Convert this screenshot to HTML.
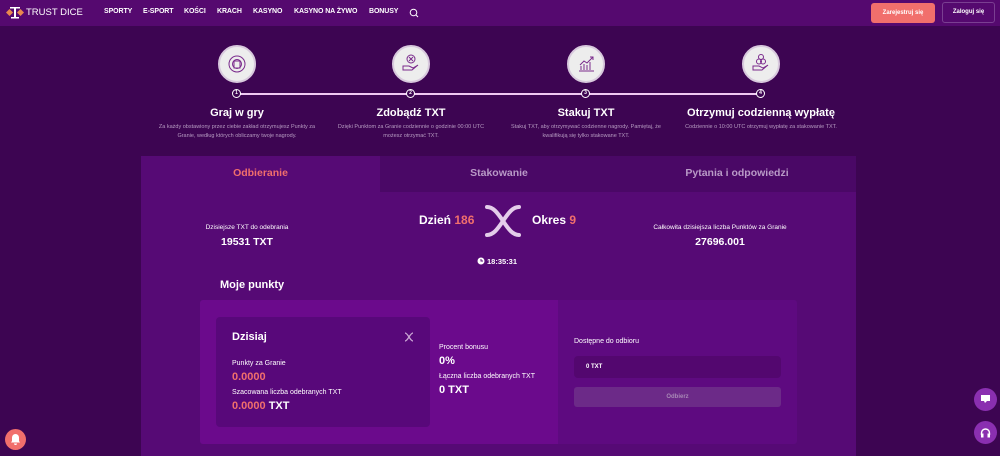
<!DOCTYPE html><html><head><meta charset="utf-8"><style>
*{margin:0;padding:0;box-sizing:border-box}
body{width:1000px;height:456px;overflow:hidden;background:#3d0552;font-family:"Liberation Sans",sans-serif;color:#fff;position:relative}
.a{position:absolute}
.hdr{left:0;top:0;width:1000px;height:26px;background:#55096f}
.nav{top:8px;font-size:7px;font-weight:bold;color:#fff;letter-spacing:-0.1px}
.c{text-align:center}
.circ{width:38px;height:38px;border-radius:50%;background:#ededed;border:2px solid #d8c9dd;top:45px}
.num{width:9px;height:9px;border-radius:50%;border:1px solid #fff;background:#3d0552;font-size:5px;line-height:7px;text-align:center;top:89px;font-weight:bold}
.t{font-size:11px;font-weight:bold;top:107px;width:220px}
.d{font-size:5.5px;color:#b79cc2;top:123px;width:160px;line-height:9px}
</style></head><body>
<div class="a hdr"></div>
<div class="a" style="left:6px;top:6px;width:18px;height:13px"><svg width="18" height="13"><rect x="1" y="4" width="5" height="5" fill="#e9884e" transform="rotate(45 3.5 6.5)"/><rect x="12" y="4" width="5" height="5" fill="#e9884e" transform="rotate(45 14.5 6.5)"/><rect x="8" y="1" width="2" height="11" fill="#fff"/><rect x="4" y="1" width="10" height="1.5" fill="#fff"/><rect x="5" y="11" width="8" height="1.5" fill="#fff"/></svg></div>
<div class="a" style="left:26px;top:7px;font-size:9.5px;color:#fff">TRUST DICE</div>
<div class="a nav" style="left:104px">SPORTY</div>
<div class="a nav" style="left:143px">E-SPORT</div>
<div class="a nav" style="left:184px">KOŚCI</div>
<div class="a nav" style="left:217px">KRACH</div>
<div class="a nav" style="left:253px">KASYNO</div>
<div class="a nav" style="left:294px">KASYNO NA ŻYWO</div>
<div class="a nav" style="left:369px">BONUSY</div>
<svg class="a" style="left:409px;top:8px" width="10" height="10"><circle cx="4.5" cy="4.5" r="3.3" stroke="#fff" fill="none" stroke-width="1"/><line x1="7" y1="7" x2="9" y2="9" stroke="#fff"/></svg>
<div class="a c" style="left:871px;top:3px;width:64px;height:20px;background:#f16f6c;border-radius:3px;font-size:6px;font-weight:bold;line-height:20px">Zarejestruj się</div>
<div class="a c" style="left:942px;top:2px;width:53px;height:21px;border:1px solid #7a3f91;border-radius:3px;font-size:6px;font-weight:bold;line-height:19px">Zaloguj się</div>

<div class="a" style="left:237px;top:93px;width:524px;height:2px;background:#f0c8f3"></div>
<div class="a circ" style="left:218px"></div><div class="a circ" style="left:392px"></div><div class="a circ" style="left:567px"></div><div class="a circ" style="left:742px"></div>
<svg class="a" style="left:227px;top:54px" width="20" height="20" fill="none" stroke="#7a2a8c" stroke-width="1"><circle cx="10" cy="10" r="8"/><rect x="7" y="7" width="6" height="7"/><circle cx="10" cy="10" r="4.5"/></svg>
<svg class="a" style="left:401px;top:53px" width="20" height="20" fill="none" stroke="#7a2a8c" stroke-width="1"><circle cx="10" cy="6" r="4"/><path d="M8 4l4 4M12 4l-4 4M2 13h6l4 2 5-3-6 5H2z"/></svg>
<svg class="a" style="left:576px;top:54px" width="20" height="20" fill="none" stroke="#7a2a8c" stroke-width="1"><path d="M3 17h15M5 16v-4M8 16v-6M11 16v-5M14 16v-8M4 11l4-4 3 2 6-6M14 3h3v3"/></svg>
<svg class="a" style="left:751px;top:53px" width="20" height="20" fill="none" stroke="#7a2a8c" stroke-width="1"><circle cx="10" cy="4" r="2.5"/><circle cx="8" cy="8.5" r="2.5"/><circle cx="12" cy="8.5" r="2.5"/><path d="M2 13h6l4 2 5-3-6 5H2z"/></svg>
<div class="a num" style="left:232px">1</div><div class="a num" style="left:406px">2</div><div class="a num" style="left:581px">3</div><div class="a num" style="left:756px">4</div>
<div class="a c t" style="left:127px">Graj w gry</div>
<div class="a c t" style="left:301px">Zdobądź TXT</div>
<div class="a c t" style="left:476px">Stakuj TXT</div>
<div class="a c t" style="left:651px">Otrzymuj codzienną wypłatę</div>
<div class="a c d" style="left:157px">Za każdy obstawiony przez ciebie zakład otrzymujesz Punkty za Granie, według których obliczamy twoje nagrody.</div>
<div class="a c d" style="left:331px">Dzięki Punktom za Granie codziennie o godzinie 00:00 UTC możesz otrzymać TXT.</div>
<div class="a c d" style="left:506px">Stakuj TXT, aby otrzymywać codzienne nagrody. Pamiętaj, że kwalifikują się tylko stakowane TXT.</div>
<div class="a c d" style="left:681px">Codziennie o 10:00 UTC otrzymuj wypłatę za stakowanie TXT.</div>

<div class="a" style="left:141px;top:156px;width:715px;height:300px;background:#560a75"></div>
<div class="a" style="left:380px;top:156px;width:476px;height:36px;background:#4a0866"></div>
<div class="a c" style="left:141px;top:167px;width:239px;font-size:10.5px;font-weight:bold;color:#f16f6c">Odbieranie</div>
<div class="a c" style="left:380px;top:167px;width:238px;font-size:10.5px;font-weight:bold;color:#b99ac7">Stakowanie</div>
<div class="a c" style="left:618px;top:167px;width:238px;font-size:10.5px;font-weight:bold;color:#b99ac7">Pytania i odpowiedzi</div>

<div class="a c" style="left:167px;top:224px;width:160px;font-size:6.5px">Dzisiejsze TXT do odebrania</div>
<div class="a c" style="left:167px;top:236px;width:160px;font-size:10.5px;font-weight:bold">19531 TXT</div>
<div class="a c" style="left:620px;top:224px;width:200px;font-size:6.5px">Całkowita dzisiejsza liczba Punktów za Granie</div>
<div class="a c" style="left:620px;top:236px;width:200px;font-size:10.5px;font-weight:bold">27696.001</div>
<div class="a" style="left:419px;top:213px;font-size:12px;font-weight:bold">Dzień <span style="color:#f16f6c">186</span></div>
<div class="a" style="left:532px;top:213px;font-size:12px;font-weight:bold">Okres <span style="color:#f16f6c">9</span></div>
<svg class="a" style="left:482px;top:202px" width="42" height="38" fill="none" stroke="#e4cdea" stroke-width="4" stroke-linecap="round"><path d="M5 5c6 0 10 5 16 14s10 14 16 14M37 5c-6 0-10 5-16 14S11 33 5 33"/></svg>
<svg class="a" style="left:477px;top:257px" width="8" height="8"><circle cx="4" cy="4" r="3.5" fill="#fff"/><path d="M4 2v2h2" stroke="#560a75" fill="none"/></svg>
<div class="a" style="left:487px;top:257px;font-size:7.5px;font-weight:bold">18:35:31</div>
<div class="a" style="left:220px;top:279px;font-size:11px;font-weight:bold">Moje punkty</div>

<div class="a" style="left:200px;top:300px;width:597px;height:144px;background:#5e0a80;border-radius:3px"></div>
<div class="a" style="left:200px;top:300px;width:358px;height:144px;background:#6b0a8c;border-radius:3px 0 0 3px"></div>
<div class="a" style="left:216px;top:317px;width:214px;height:110px;background:#58087a;border-radius:4px"></div>
<div class="a" style="left:232px;top:331px;font-size:11px;font-weight:bold">Dzisiaj</div>
<svg class="a" style="left:404px;top:332px" width="10" height="10" fill="none" stroke="#caa6d4" stroke-width="1.3"><path d="M1 1c3 0 5 8 8 8M9 1C6 1 4 9 1 9"/></svg>
<div class="a" style="left:232px;top:360px;font-size:7px">Punkty za Granie</div>
<div class="a" style="left:232px;top:371px;font-size:11px;font-weight:bold;color:#f16f6c">0.0000</div>
<div class="a" style="left:232px;top:389px;font-size:7px">Szacowana liczba odebranych TXT</div>
<div class="a" style="left:232px;top:400px;font-size:11px;font-weight:bold"><span style="color:#f16f6c">0.0000</span> TXT</div>
<div class="a" style="left:439px;top:344px;font-size:7px">Procent bonusu</div>
<div class="a" style="left:439px;top:355px;font-size:11px;font-weight:bold">0%</div>
<div class="a" style="left:439px;top:373px;font-size:7px">Łączna liczba odebranych TXT</div>
<div class="a" style="left:439px;top:384px;font-size:11px;font-weight:bold">0 TXT</div>
<div class="a" style="left:574px;top:338px;font-size:7px">Dostępne do odbioru</div>
<div class="a" style="left:574px;top:356px;width:207px;height:22px;background:#53076f;border-radius:4px;font-size:6px;font-weight:bold;line-height:22px;padding-left:12px">0 TXT</div>
<div class="a c" style="left:574px;top:387px;width:207px;height:20px;background:#6c2a88;border-radius:3px;font-size:6px;font-weight:bold;line-height:20px;color:#a888b6">Odbierz</div>

<div class="a" style="left:974px;top:388px;width:23px;height:23px;border-radius:50%;background:#8a2fb0"></div>
<svg class="a" style="left:980px;top:394px" width="11" height="11"><path d="M1 1h9v6H7l-2 2-1-2H1z" fill="#fff"/></svg>
<div class="a" style="left:974px;top:421px;width:23px;height:23px;border-radius:50%;background:#8a2fb0"></div>
<svg class="a" style="left:980px;top:427px" width="11" height="11" fill="none" stroke="#fff" stroke-width="1.4"><path d="M1.5 8V6a4 4 0 0 1 8 0v2"/><rect x="1" y="6.5" width="2.5" height="4" fill="#fff" stroke="none"/><rect x="7.5" y="6.5" width="2.5" height="4" fill="#fff" stroke="none"/></svg>
<div class="a" style="left:5px;top:429px;width:21px;height:21px;border-radius:50%;background:#f16f6c"></div>
<svg class="a" style="left:10px;top:433px" width="11" height="12"><path d="M5.5 1a3.5 3.5 0 0 0-3.5 3.5V8L1 9.5h9L9 8V4.5A3.5 3.5 0 0 0 5.5 1z M4 10.5h3a1.5 1.5 0 0 1-3 0z" fill="#fff"/></svg>
</body></html>
